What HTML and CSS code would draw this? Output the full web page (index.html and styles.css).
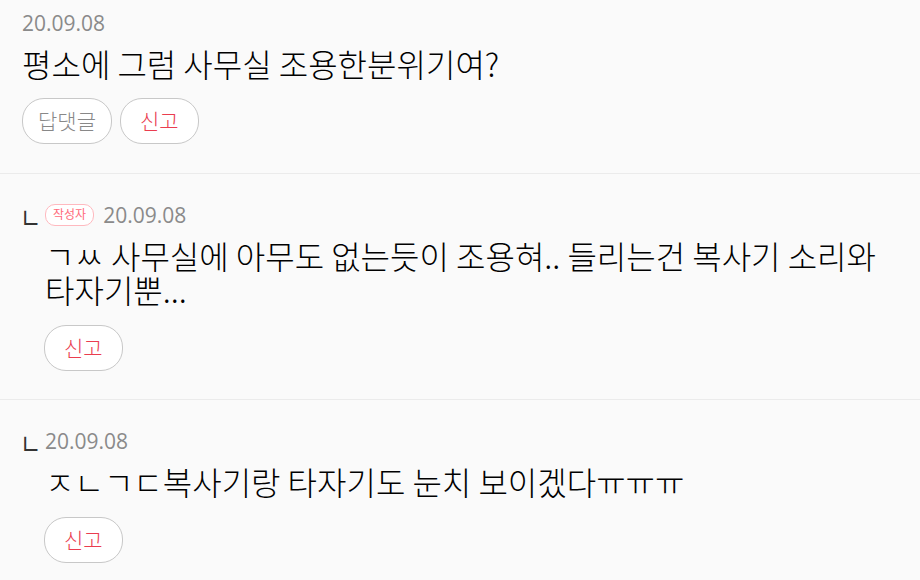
FILE: index.html
```html
<!DOCTYPE html>
<html>
<head lang="ko">
    <meta charset="UTF-8">
    <title>댓글</title>
    <link rel="stylesheet" href="styles.css">
</head>
<body>
    <ul id="comments">
        <li class="comment">
            <div class="meta">
                <span class="date">20.09.08</span>
            </div>
            <p class="text">평소에 그럼 사무실 조용한분위기여?</p>
            <div class="btns">
                <span class="btn">답댓글</span>
                <span class="btn report">신고</span>
            </div>
        </li>
        <li class="comment reply">
            <div class="meta owner">
                <span class="mark">ㄴ</span>
                <span class="badge">작성자</span>
                <span class="date">20.09.08</span>
            </div>
            <p class="text">ㄱㅆ 사무실에 아무도 없는듯이 조용혀.. 들리는건 복사기 소리와 타자기뿐...</p>
            <div class="btns">
                <span class="btn report">신고</span>
            </div>
        </li>
        <li class="comment reply">
            <div class="meta">
                <span class="mark">ㄴ</span>
                <span class="date">20.09.08</span>
            </div>
            <p class="text">ㅈㄴㄱㄷ복사기랑 타자기도 눈치 보이겠다ㅠㅠㅠ</p>
            <div class="btns">
                <span class="btn report">신고</span>
            </div>
        </li>
    </ul>
</body>
</html>
```

FILE: styles.css
```css
*{
    padding: 0;
    margin: 0;
}
body{
    background: #fafafa;
    font-family: "Noto Sans CJK KR", "Noto Sans", sans-serif;
    color: #000;
}
ul{
    list-style: none;
}
.comment{
    padding: 24px 22px 29px;
    border-bottom: 1px solid #ebebeb;
}
.comment:first-child{
    padding-top: 6px;
}
.comment.reply{
    padding-bottom: 28px;
}
.meta{
    display: flex;
    align-items: center;
    height: 34px;
}
.meta.owner{
    margin-bottom: 3px;
}
.date{
    font-family: "Open Sans", "Noto Sans CJK KR", sans-serif;
    font-size: 21px;
    color: #8a8a8a;
}
.mark{
    flex-shrink: 0;
    width: 25px;
    margin-left: -2px;
    margin-top: 2px;
    line-height: 20px;
    font-size: 23px;
    font-weight: 400;
    color: #333;
    transform: scaleY(1.3);
}
.badge{
    display: inline-block;
    height: 20px;
    line-height: 18px;
    padding: 0 7px;
    margin-right: 9px;
    border: 1px solid #ffb9bf;
    border-radius: 10px;
    background: #fff;
    color: #ff6b7b;
    font-size: 12px;
}
.text{
    font-size: 32px;
    font-weight: 300;
    line-height: 34px;
    margin-top: 6px;
}
.reply .text{
    padding-left: 23px;
}
.btns{
    display: flex;
    gap: 8px;
    margin-top: 18px;
}
.reply .btns{
    margin-top: 19px;
    padding-left: 22px;
}
.btn{
    display: inline-block;
    height: 44px;
    line-height: 42px;
    padding: 0 15px;
    border: 1px solid #c8c8c8;
    border-radius: 22px;
    background: #fff;
    color: #888;
    font-size: 21px;
    font-weight: 300;
}
.btn.report{
    padding: 0 19px;
    color: #ea3d4f;
}
```
